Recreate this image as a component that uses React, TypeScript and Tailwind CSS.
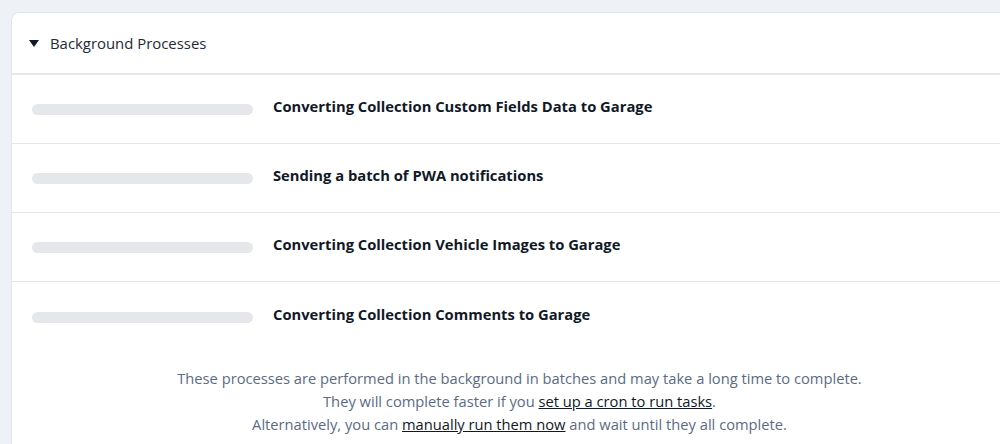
import React from "react";

const processes = [
  "Converting Collection Custom Fields Data to Garage",
  "Sending a batch of PWA notifications",
  "Converting Collection Vehicle Images to Garage",
  "Converting Collection Comments to Garage",
];

export default function App() {
  return (
    <div
      className="w-[1000px] h-[444px] overflow-hidden bg-[#eef1f6] pt-3 pl-[11px]"
      style={{ fontFamily: '"Open Sans", "Noto Sans", sans-serif' }}
    >
      <div className="w-[1016px] bg-white rounded-tl-lg border-l border-t border-[#e2e6ec] pb-6">
        <div className="h-[62px] flex items-center pl-[17px] gap-[11px] border-b-2 border-[#e3e8ee]">
          <svg width="10" height="7" viewBox="0 0 10 7" className="mt-px">
            <path d="M0 0 H10 L5 7 Z" fill="#111827" />
          </svg>
          <span className="text-[14.9px] text-[#1f2937]">Background Processes</span>
        </div>
        {processes.map((p, i) => (
          <div
            key={p}
            className={`h-[69px] flex items-center pl-5 gap-5 ${i < processes.length - 1 ? "border-b border-[#e3e8ee]" : ""}`}
          >
            <div className="w-[221px] h-[11px] rounded-full bg-[#e5e7eb] mt-[1px]" />
            <span className="text-[14.75px] font-bold text-[#111827] mb-[5px]">{p}</span>
          </div>
        ))}
        <div className="mt-[16px] text-center text-[14.7px] leading-[23px] text-[#5b6b86]">
          <p>These processes are performed in the background in batches and may take a long time to complete.</p>
          <p>
            They will complete faster if you{" "}
            <a className="underline text-[#111827]">set up a cron to run tasks</a>.
          </p>
          <p>
            Alternatively, you can <a className="underline text-[#111827]">manually run them now</a> and wait until they all complete.
          </p>
        </div>
      </div>
    </div>
  );
}
